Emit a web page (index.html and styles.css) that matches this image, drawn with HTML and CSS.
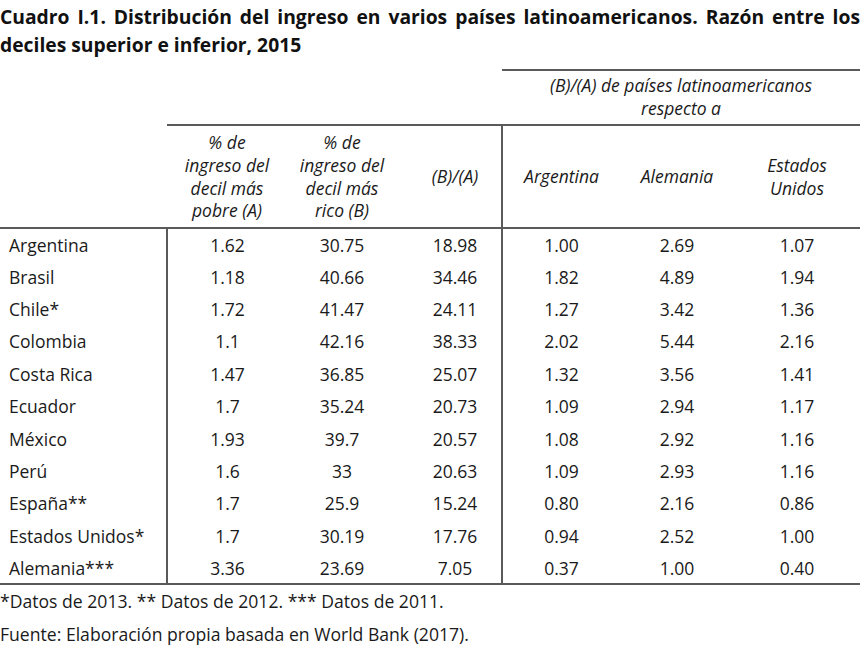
FILE: index.html
```html
<!DOCTYPE html>
<html lang="es">
<head>
<meta charset="utf-8">
<title>Cuadro I.1</title>
<link rel="stylesheet" href="styles.css">
</head>
<body>
<div class="page">
  <p class="title">Cuadro I.1. Distribución del ingreso en varios países latinoamericanos. Razón entre los deciles superior e inferior, 2015</p>
  <table class="tbl">
    <colgroup>
      <col class="c1"><col class="c2"><col class="c3"><col class="c4"><col class="c5"><col class="c6"><col class="c7">
    </colgroup>
    <thead>
      <tr class="hr1">
        <th colspan="4" class="blank"></th>
        <th colspan="3" class="group">(B)/(A) de países latinoamericanos<br>respecto a</th>
      </tr>
      <tr class="hr2">
        <th class="blank"></th>
        <th class="ruled">% de<br>ingreso del<br>decil más<br>pobre (A)</th>
        <th class="ruled">% de<br>ingreso del<br>decil más<br>rico (B)</th>
        <th class="ruled sep ratio">(B)/(A)</th>
        <th class="ruled">Argentina</th>
        <th class="ruled">Alemania</th>
        <th class="ruled">Estados<br>Unidos</th>
      </tr>
    </thead>
    <tbody>
      <tr><td class="name">Argentina</td><td>1.62</td><td>30.75</td><td class="sep ratio">18.98</td><td>1.00</td><td>2.69</td><td>1.07</td></tr>
      <tr><td class="name">Brasil</td><td>1.18</td><td>40.66</td><td class="sep ratio">34.46</td><td>1.82</td><td>4.89</td><td>1.94</td></tr>
      <tr><td class="name">Chile*</td><td>1.72</td><td>41.47</td><td class="sep ratio">24.11</td><td>1.27</td><td>3.42</td><td>1.36</td></tr>
      <tr><td class="name">Colombia</td><td>1.1</td><td>42.16</td><td class="sep ratio">38.33</td><td>2.02</td><td>5.44</td><td>2.16</td></tr>
      <tr><td class="name">Costa Rica</td><td>1.47</td><td>36.85</td><td class="sep ratio">25.07</td><td>1.32</td><td>3.56</td><td>1.41</td></tr>
      <tr><td class="name">Ecuador</td><td>1.7</td><td>35.24</td><td class="sep ratio">20.73</td><td>1.09</td><td>2.94</td><td>1.17</td></tr>
      <tr><td class="name">México</td><td>1.93</td><td>39.7</td><td class="sep ratio">20.57</td><td>1.08</td><td>2.92</td><td>1.16</td></tr>
      <tr><td class="name">Perú</td><td>1.6</td><td>33</td><td class="sep ratio">20.63</td><td>1.09</td><td>2.93</td><td>1.16</td></tr>
      <tr><td class="name">España**</td><td>1.7</td><td>25.9</td><td class="sep ratio">15.24</td><td>0.80</td><td>2.16</td><td>0.86</td></tr>
      <tr><td class="name">Estados Unidos*</td><td>1.7</td><td>30.19</td><td class="sep ratio">17.76</td><td>0.94</td><td>2.52</td><td>1.00</td></tr>
      <tr><td class="name">Alemania***</td><td>3.36</td><td>23.69</td><td class="sep ratio">7.05</td><td>0.37</td><td>1.00</td><td>0.40</td></tr>
    </tbody>
  </table>
  <p class="note">*Datos de 2013. ** Datos de 2012. *** Datos de 2011.</p>
  <p class="note">Fuente: Elaboración propia basada en World Bank (2017).</p>
</div>
</body>
</html>
```

FILE: styles.css
```css
html, body {
  margin: 0;
  padding: 0;
  background: #ffffff;
}
body {
  font-family: "Open Sans", "Noto Sans", sans-serif;
  color: #1a1a1a;
}
.page {
  width: 860px;
}
.title {
  margin: 0;
  padding-top: 3px;
  font-weight: 700;
  font-size: 19.3px;
  line-height: 28px;
  text-align: justify;
  color: #111111;
}
.tbl {
  width: 860px;
  border-collapse: collapse;
  table-layout: fixed;
  margin-top: 10px;
  font-size: 17.5px;
}
.c1 { width: 167px; }
.c2 { width: 120px; }
.c3 { width: 110px; }
.c4 { width: 105px; }
.c5 { width: 118px; }
.c6 { width: 114px; }
.c7 { width: 126px; }
th {
  font-weight: 400;
  font-style: italic;
  text-align: center;
  padding: 0;
  vertical-align: middle;
  font-size: 17.5px;
}
.hr1 { height: 55px; }
.hr1 .group {
  border-top: 2px solid #5a5a5a;
  line-height: 23px;
  padding-bottom: 2px;
}
.hr2 { height: 103px; }
.hr2 th {
  line-height: 22.7px;
}
.hr2 .ruled {
  border-top: 2px solid #5a5a5a;
}
.sep {
  border-right: 2px solid #5a5a5a;
}
th.ratio, td.ratio {
  padding-left: 12px;
}
tbody tr {
  height: 32.4px;
}
tbody tr:first-child td {
  border-top: 2px solid #5a5a5a;
}
tbody tr:last-child td {
  border-bottom: 2px solid #5a5a5a;
}
td {
  padding: 0;
  text-align: center;
  vertical-align: middle;
  line-height: 20px;
}
td.name {
  text-align: left;
  padding-left: 9px;
  border-right: 2px solid #5a5a5a;
}
.note {
  margin: 0;
  font-size: 17.6px;
  line-height: 33px;
}
```
